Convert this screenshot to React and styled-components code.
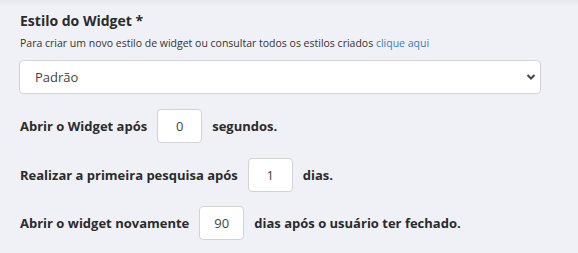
import React, { useState } from "react";
import styled, { createGlobalStyle } from "styled-components";

const GlobalStyle = createGlobalStyle`
  html, body {
    margin: 0;
    padding: 0;
    background: #f0f1f6;
  }
  body {
    font-family: "Open Sans", "Noto Sans", sans-serif;
    color: #333;
  }
`;

const Panel = styled.div`
  min-height: 253px;
  box-sizing: border-box;
  padding: 11px 37px 0 20px;
  background: linear-gradient(#e6e7ec, #f0f1f6 6px);
`;

const Title = styled.label`
  display: block;
  font-weight: 700;
  font-size: 14px;
  line-height: 19px;
  color: #2b2b2b;
`;

const Help = styled.p`
  margin: 6px 0 0;
  font-size: 10.5px;
  line-height: 15px;
  color: #333;

  a {
    color: #3d7cbf;
    text-decoration: none;
  }
`;

const SelectWrap = styled.div`
  position: relative;
  margin: 9px 0 0 -1px;
`;

const Select = styled.select`
  appearance: none;
  width: 100%;
  height: 34px;
  box-sizing: border-box;
  padding: 0 30px 0 15px;
  font-family: inherit;
  font-size: 13px;
  color: #444;
  background: #fff;
  border: 1px solid #d3d3d6;
  border-radius: 4px;
  outline: none;
`;

const Chevron = styled.svg`
  position: absolute;
  right: 5px;
  top: 13px;
  pointer-events: none;
`;

const Row = styled.div`
  display: flex;
  align-items: center;
  gap: 10px;
  margin-top: ${(p) => p.$top}px;
  font-weight: 700;
  font-size: 13px;
  color: #2b2b2b;
`;

const NumberBox = styled.input`
  width: 45px;
  height: 34px;
  box-sizing: border-box;
  text-align: center;
  font-family: inherit;
  font-size: 13px;
  font-weight: 400;
  color: #444;
  background: #fff;
  border: 1px solid #d3d3d6;
  border-radius: 4px;
  outline: none;
`;

function Field({ before, value, after, top }) {
  const [v, setV] = useState(value);
  return (
    <Row $top={top}>
      <span>{before}</span>
      <NumberBox value={v} onChange={(e) => setV(e.target.value)} />
      <span>{after}</span>
    </Row>
  );
}

export default function App() {
  return (
    <>
      <GlobalStyle />
      <Panel>
        <Title>Estilo do Widget *</Title>
        <Help>
          Para criar um novo estilo de widget ou consultar todos os estilos criados{" "}
          <a href="#">clique aqui</a>
        </Help>
        <SelectWrap>
          <Select defaultValue="padrao">
            <option value="padrao">Padrão</option>
          </Select>
          <Chevron width="10" height="8" viewBox="0 0 10 8">
            <path d="M1.5 2 L5 5.5 L8.5 2" fill="none" stroke="#444" strokeWidth="2" />
          </Chevron>
        </SelectWrap>
        <Field top={15} before="Abrir o Widget após" value="0" after="segundos." />
        <Field top={15} before="Realizar a primeira pesquisa após" value="1" after="dias." />
        <Field top={14} before="Abrir o widget novamente" value="90" after="dias após o usuário ter fechado." />
      </Panel>
    </>
  );
}
